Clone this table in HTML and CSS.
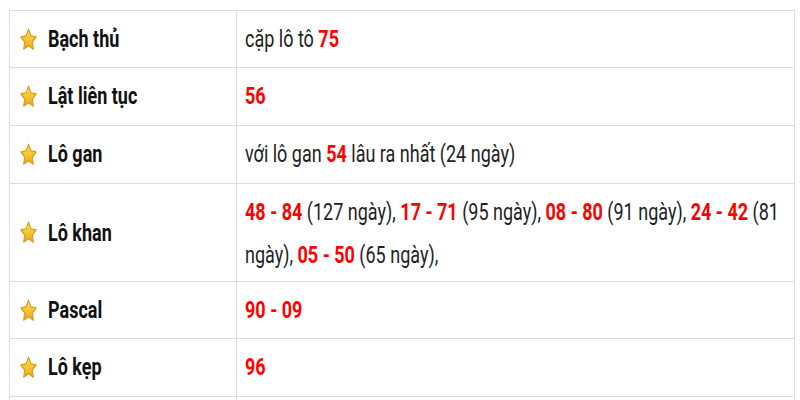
FILE: index.html
```html
<!DOCTYPE html>
<html lang="vi">
<head>
<meta charset="utf-8">
<title>Thống kê lô tô</title>
<link rel="stylesheet" href="styles.css">
</head>
<body>
<svg class="defs" aria-hidden="true">
  <defs>
    <linearGradient id="starFill" x1="0" y1="0" x2="0" y2="1">
      <stop offset="0" stop-color="#ffdc55"/>
      <stop offset="0.55" stop-color="#f4c432"/>
      <stop offset="1" stop-color="#e4a21c"/>
    </linearGradient>
  </defs>
</svg>
<div class="page">
  <table class="stats">
    <tbody>
      <tr>
        <th class="label"><span class="label-inner"><svg class="star" viewBox="1.5 1.5 21 20.5" preserveAspectRatio="none" aria-hidden="true"><path d="M12 2.6 L15 8.5 L21.4 9.4 L16.8 13.9 L17.9 20.4 L12 17.3 L6.1 20.4 L7.2 13.9 L2.6 9.4 L9 8.5 Z"/></svg><span class="tall">Bạch thủ</span></span></th>
        <td class="value"><div class="tall">cặp lô tô <b class="num">75</b></div></td>
      </tr>
      <tr>
        <th class="label"><span class="label-inner"><svg class="star" viewBox="1.5 1.5 21 20.5" preserveAspectRatio="none" aria-hidden="true"><path d="M12 2.6 L15 8.5 L21.4 9.4 L16.8 13.9 L17.9 20.4 L12 17.3 L6.1 20.4 L7.2 13.9 L2.6 9.4 L9 8.5 Z"/></svg><span class="tall">Lật liên tục</span></span></th>
        <td class="value"><div class="tall"><b class="num">56</b></div></td>
      </tr>
      <tr>
        <th class="label"><span class="label-inner"><svg class="star" viewBox="1.5 1.5 21 20.5" preserveAspectRatio="none" aria-hidden="true"><path d="M12 2.6 L15 8.5 L21.4 9.4 L16.8 13.9 L17.9 20.4 L12 17.3 L6.1 20.4 L7.2 13.9 L2.6 9.4 L9 8.5 Z"/></svg><span class="tall">Lô gan</span></span></th>
        <td class="value"><div class="tall">với lô gan <b class="num">54</b> lâu ra nhất (24 ngày)</div></td>
      </tr>
      <tr class="multi">
        <th class="label"><span class="label-inner"><svg class="star" viewBox="1.5 1.5 21 20.5" preserveAspectRatio="none" aria-hidden="true"><path d="M12 2.6 L15 8.5 L21.4 9.4 L16.8 13.9 L17.9 20.4 L12 17.3 L6.1 20.4 L7.2 13.9 L2.6 9.4 L9 8.5 Z"/></svg><span class="tall">Lô khan</span></span></th>
        <td class="value"><div class="tall"><b class="num">48 - 84</b> <span>(127 ngày),</span> <b class="num">17 - 71</b> <span>(95 ngày),</span> <b class="num">08 - 80</b> <span>(91 ngày),</span> <b class="num">24 - 42</b> <span>(81</span> <span>ngày),</span> <b class="num">05 - 50</b> <span>(65 ngày),</span></div></td>
      </tr>
      <tr>
        <th class="label"><span class="label-inner"><svg class="star" viewBox="1.5 1.5 21 20.5" preserveAspectRatio="none" aria-hidden="true"><path d="M12 2.6 L15 8.5 L21.4 9.4 L16.8 13.9 L17.9 20.4 L12 17.3 L6.1 20.4 L7.2 13.9 L2.6 9.4 L9 8.5 Z"/></svg><span class="tall">Pascal</span></span></th>
        <td class="value"><div class="tall"><b class="num">90 - 09</b></div></td>
      </tr>
      <tr>
        <th class="label"><span class="label-inner"><svg class="star" viewBox="1.5 1.5 21 20.5" preserveAspectRatio="none" aria-hidden="true"><path d="M12 2.6 L15 8.5 L21.4 9.4 L16.8 13.9 L17.9 20.4 L12 17.3 L6.1 20.4 L7.2 13.9 L2.6 9.4 L9 8.5 Z"/></svg><span class="tall">Lô kẹp</span></span></th>
        <td class="value"><div class="tall"><b class="num">96</b></div></td>
      </tr>
      <tr class="empty">
        <th class="label"></th>
        <td class="value"></td>
      </tr>
    </tbody>
  </table>
</div>
</body>
</html>
```

FILE: styles.css
```css
html, body {
  margin: 0;
  padding: 0;
  background: #ffffff;
}

.defs {
  position: absolute;
  width: 0;
  height: 0;
  overflow: hidden;
}

.page {
  padding: 10px 0 0 9px;
  font-family: "Roboto", "Liberation Sans", sans-serif;
  font-size: 18px;
  color: #222222;
}

.stats {
  width: 786px;
  border-collapse: collapse;
  table-layout: fixed;
}

.stats th,
.stats td {
  border: 1px solid #dddddd;
  line-height: 32px;
  padding: 12px 8px 12px 8px;
  vertical-align: middle;
  text-align: left;
}

.stats tr:nth-child(2) th,
.stats tr:nth-child(2) td,
.stats tr:nth-child(3) th,
.stats tr:nth-child(3) td,
.stats tr:nth-child(6) th,
.stats tr:nth-child(6) td {
  padding-bottom: 13px;
}

.stats .multi th,
.stats .multi td {
  padding-top: 16.5px;
  padding-bottom: 16.5px;
}

.stats .empty th,
.stats .empty td {
  height: 32px;
}

.label {
  width: 208px;
  font-weight: 700;
  color: #111111;
}

.stats th.label {
  padding-left: 10px;
}

.label-inner {
  display: flex;
  align-items: center;
  gap: 11px;
}

.tall {
  display: block;
  transform: scaleY(1.35);
  transform-origin: 50% 50%;
}

.label-inner .tall {
  display: inline-block;
}

.star {
  width: 17px;
  height: 23px;
  flex: none;
  fill: url(#starFill);
  stroke: #d99b1c;
  stroke-width: 1.3;
  stroke-linejoin: round;
}

.value {
  font-weight: 400;
}

.num {
  color: #ff0000;
  font-weight: 700;
}
```
